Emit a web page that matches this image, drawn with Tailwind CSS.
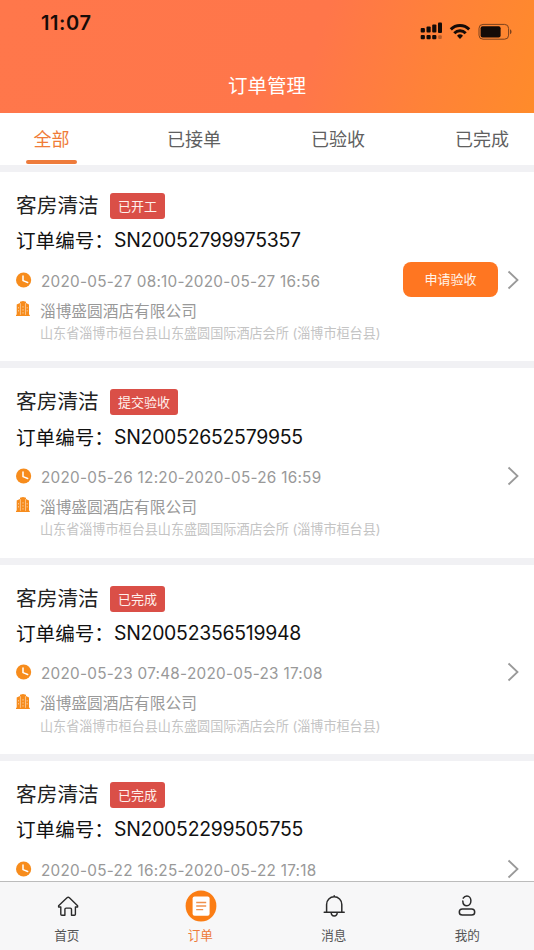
<!DOCTYPE html>
<html lang="zh-CN">
<head>
<meta charset="utf-8">
<title>订单管理</title>
<script src="https://cdn.jsdelivr.net/npm/@tailwindcss/browser@4"></script>
</head>
<body class="w-[534px] h-[950px] overflow-hidden bg-white font-['Inter','Noto_Sans_CJK_SC',sans-serif]">
<div class="flex flex-col h-[950px]">
  <header class="h-[113px] shrink-0 flex flex-col bg-[linear-gradient(108deg,#ff774b_0%,#ff764a_58%,#ff8238_80%,#ff8b2a_100%)]">
    <div class="h-[60px] flex justify-between pl-[41px] pr-[21px]">
      <div class="pt-[11px] text-[20px] leading-6 font-semibold tracking-[0.6px] text-[#160c08]">11:07</div>
      <div class="flex items-start pt-[22px] text-[#130b08]">
        <svg class="w-[23px] h-[18px]" viewBox="0 0 23 18" fill="currentColor"><rect x="0.7" y="6" width="4.2" height="4.6" rx="1"/><rect x="6.5" y="4.6" width="4.2" height="6" rx="1"/><rect x="12.2" y="2.6" width="4.2" height="8" rx="1"/><rect x="18" y="0.5" width="4" height="10.5" rx="1"/><rect x="0.7" y="13" width="4.2" height="4.2" rx="1"/><rect x="6.5" y="13" width="4.2" height="4.2" rx="1"/><rect x="12.2" y="13" width="4.2" height="4.2" rx="1"/><rect x="18.2" y="13.2" width="3.6" height="3.8" rx="1" opacity=".3"/></svg>
        <svg class="w-[22px] h-[18px] ml-[6px]" viewBox="0 0 22 18" fill="none" stroke="currentColor" stroke-width="3"><path d="M1.8 7.4a13 13 0 0 1 18.4 0"/><path d="M5.3 11.2a8.1 8.1 0 0 1 11.4 0"/><path d="M8 13.8a4.3 4.3 0 0 1 6 0L11 17z" fill="currentColor" stroke="none"/></svg>
        <svg class="w-[35px] h-[18px] ml-[7px]" viewBox="0 0 35 18"><rect x="1" y="2.4" width="29.6" height="14.8" rx="4" fill="none" stroke="#7b421e" stroke-width="1"/><rect x="2.6" y="4.2" width="20" height="11.2" rx="2" fill="currentColor"/><path d="M32 7.2c2 .8 2 4.2 0 5z" fill="#7b421e"/></svg>
      </div>
    </div>
    <h1 class="text-center text-white text-[19.5px] leading-[52px] font-normal">订单管理</h1>
  </header>

  <nav class="h-[52px] shrink-0 flex justify-between pl-[26px] pr-[25px] text-[18px] leading-[54px] text-[#606060]">
    <div class="w-[51px] flex flex-col items-center text-[#f07c38]"><span class="h-[47px]">全部</span><i class="block w-[51px] h-[4px] rounded-full bg-[#ee7b3b]"></i></div>
    <div>已接单</div>
    <div>已验收</div>
    <div>已完成</div>
  </nav>

  <main id="orders" class="flex-1 min-h-0 overflow-hidden"></main>

  <footer class="h-[69px] shrink-0 border-t border-[#bcbcbc] bg-[#f7f7f8] grid grid-cols-4 text-[12.6px] text-[#555]">
    <div class="flex flex-col items-center pt-2"><svg class="w-8 h-8 ml-[2px]" viewBox="0 0 32 32" fill="none" stroke="#2b2b2b" stroke-width="1.4" stroke-linejoin="round" stroke-linecap="round"><path d="M8.8 17H6.6v-1.2L15 7.7q1.2-1 2.4 0l8.2 8.1V17h-2.2v7.2q0 1-1 1h-2.9v-5.9q0-1.2-1.2-1.2h-4.2q-1.2 0-1.2 1.2v5.9H9.8q-1 0-1-1z"/></svg><span class="leading-[27px]">首页</span></div>
    <div class="flex flex-col items-center pt-2 text-[#ee7b3b]"><svg class="w-8 h-8 ml-[1px]" viewBox="0 0 32 32"><circle cx="16" cy="16" r="15.4" fill="#fb7d14"/><rect x="7.6" y="6.4" width="17" height="19.4" rx="2" fill="#fff"/><path d="M11.2 12.5h10M11.2 16h10M11.2 19.6h7" stroke="#ef914c" stroke-width="1.3"/></svg><span class="leading-[27px]">订单</span></div>
    <div class="flex flex-col items-center pt-2"><svg class="w-8 h-8" viewBox="0 0 32 32" fill="none" stroke="#2b2b2b" stroke-width="1.5" stroke-linecap="round"><path d="M8.6 22v-7.6a7.6 7.6 0 0 1 15.2 0V22M6.2 22.2h20M16.2 6.5V5.8M13.2 22.6a3 3.4 0 0 0 6 0"/></svg><span class="leading-[27px]">消息</span></div>
    <div class="flex flex-col items-center pt-2"><svg class="w-8 h-8" viewBox="0 0 32 32" fill="none" stroke="#2b2b2b" stroke-width="1.5" stroke-linecap="round"><path d="M12.2 8.2C13.1 6.6 14.3 6 15.9 6c2.4 0 4 2.2 4 4.8s-1.7 4.9-4 4.9-4-2-4.1-4.6"/><rect x="8.3" y="18.9" width="15.4" height="6.2" rx="3.1"/></svg><span class="leading-[27px]">我的</span></div>
  </footer>
</div>

<script>
const company = '淄博盛圆酒店有限公司';
const address = '山东省淄博市桓台县山东盛圆国际酒店会所 (淄博市桓台县)';
const orders = [
  { status: '已开工', sn: 'SN20052799975357', time: '2020-05-27 08:10-2020-05-27 16:56', company, address, action: '申请验收' },
  { status: '提交验收', sn: 'SN20052652579955', time: '2020-05-26 12:20-2020-05-26 16:59', company, address },
  { status: '已完成', sn: 'SN20052356519948', time: '2020-05-23 07:48-2020-05-23 17:08', company, address },
  { status: '已完成', sn: 'SN20052299505755', time: '2020-05-22 16:25-2020-05-22 17:18' },
];
document.getElementById('orders').innerHTML = orders.map(o => `
  <article class="h-[196.3px] border-t-[7.5px] border-[#f1f1f4] bg-white pl-4 pr-[14px] pt-[18.5px]">
    <div class="h-[31px] flex items-center">
      <h2 class="text-[20.7px] leading-[30px] font-normal text-[#222]">客房清洁</h2>
      <span class="ml-[11px] px-[8.2px] h-[26px] rounded-[3px] bg-[#da4f47] text-[#fff0ec] text-[13px] leading-[26px]">${o.status}</span>
    </div>
    <div class="h-[40px] flex items-center text-[19.6px] text-[#111]">
      <span class="w-[98px] pb-[3px] whitespace-nowrap font-['Noto_Sans_CJK_SC',sans-serif]">订单编号：</span><span class="pb-px text-[19.4px] tracking-[-0.25px]">${o.sn}</span>
    </div>
    <div class="h-[39.5px] flex items-center text-[#999]">
      <svg class="w-4 h-4 mb-[3px] shrink-0" viewBox="0 0 16 16"><circle cx="7.6" cy="8" r="7.6" fill="#f78c1c"/><path d="M7 4v4.6l4.7 1.9" fill="none" stroke="#fff" stroke-width="1.5" stroke-linecap="round"/></svg>
      <time class="ml-[9px] pt-[2px] flex-1 text-[15.3px] tracking-[0.27px] whitespace-nowrap">${o.time}</time>
      ${o.action ? `<button class="w-[95px] h-[35px] mb-[3px] rounded-[8px] bg-[#ff7621] text-[#fff3e9] text-[13px] mr-[8px]">${o.action}</button>` : ''}
      <svg class="w-[14px] h-5 mb-[3px] shrink-0" viewBox="0 0 14 20" fill="none" stroke="#999" stroke-width="1.8"><path d="M2.5 1.5 11.5 10l-9 8.5"/></svg>
    </div>
    ${o.company ? `
    <div class="h-[21px] flex items-center text-[15.7px] text-[#999]">
      <svg class="w-[14px] h-[15px] mb-[6px] mr-[10px] shrink-0" viewBox="0 0 14 15"><path d="M0 13.8h.7V3.6L4 2V.8L7 0l3 .8V2l3 1.6v10.2h.8V15H0z" fill="#f78c1c"/><path d="M4.4 2.2v11.6M9.5 2.2v11.6M7 5v1.7M7 8v1.7M7 11v1.7M2.5 6v1.5M2.5 9v1.5M11.2 6v1.5M11.2 9v1.5" stroke="#fff" stroke-width=".8" opacity=".6"/></svg>
      <span>${o.company}</span>
    </div>
    <div class="h-[22px] pl-6 text-[13.1px] leading-[22px] text-[#c4c4c4] whitespace-nowrap">${o.address}</div>` : ''}
  </article>`).join('');
</script>
</body>
</html>
